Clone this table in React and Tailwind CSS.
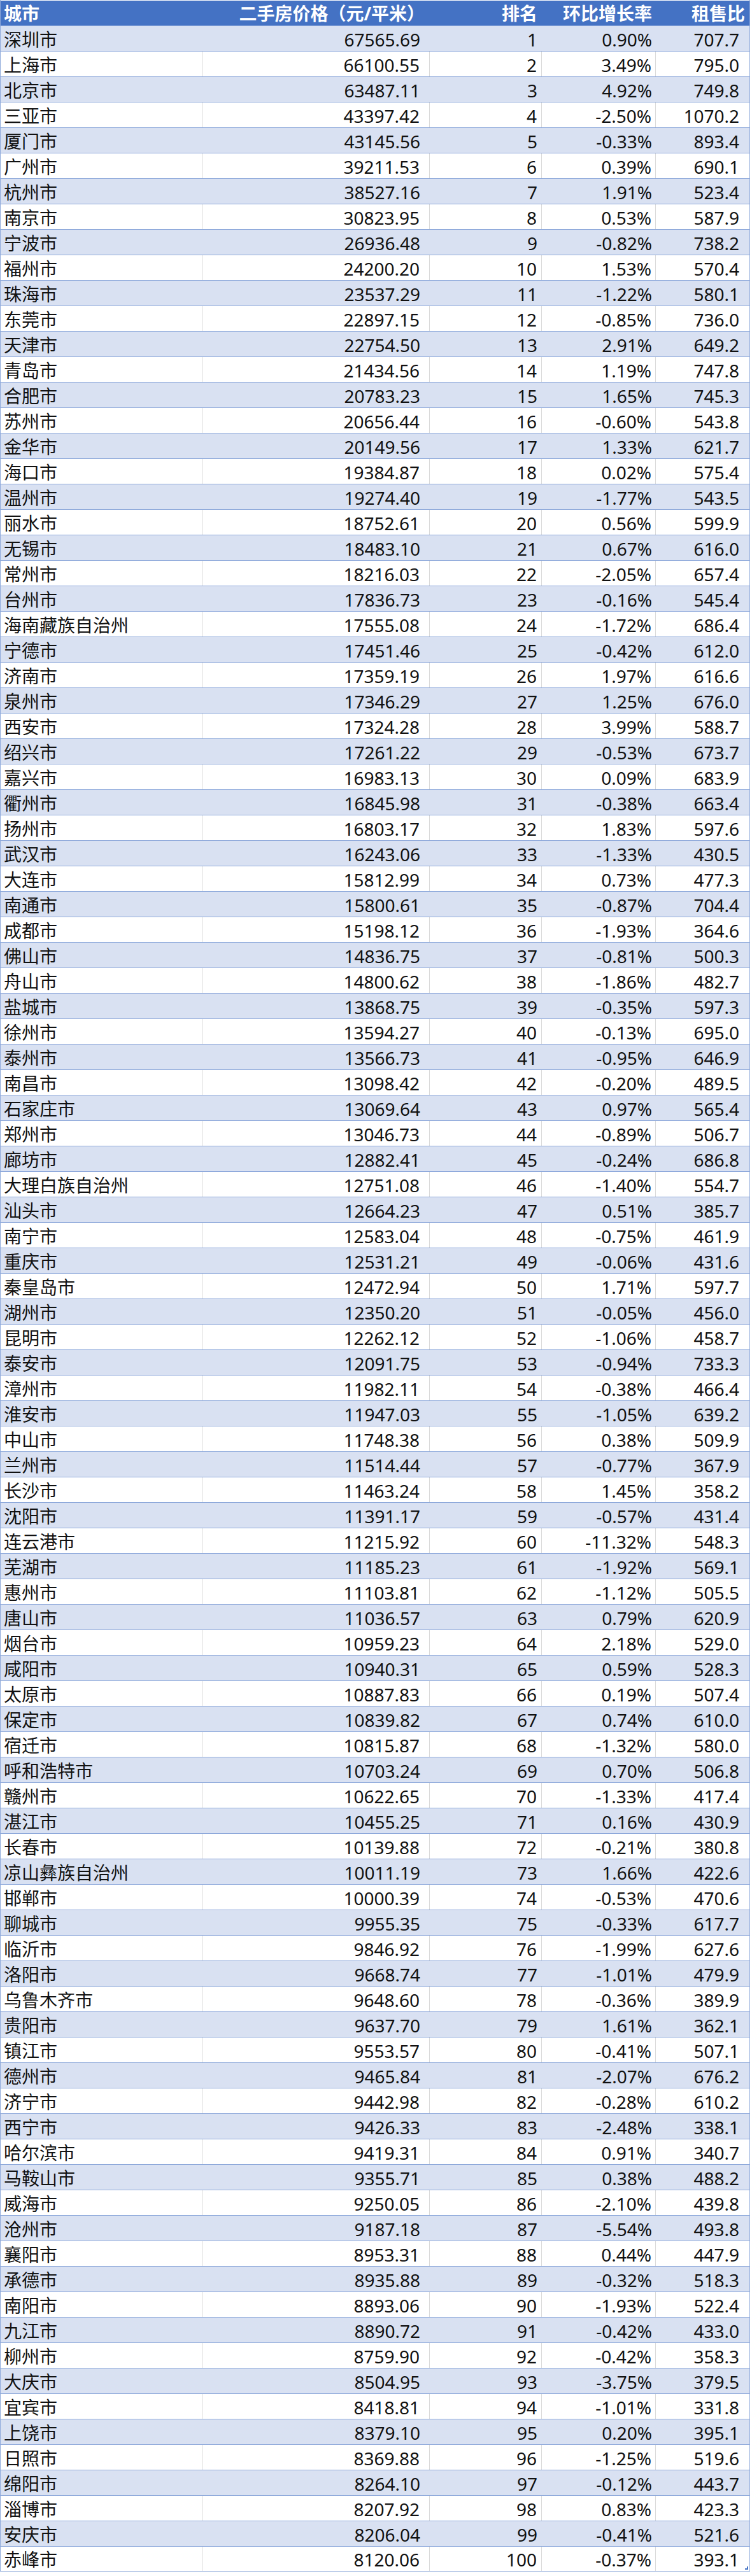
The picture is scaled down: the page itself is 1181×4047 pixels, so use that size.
const ROWS = [
  ['深圳市', '67565.69', 1, '0.90%', '707.7'],
  ['上海市', '66100.55', 2, '3.49%', '795.0'],
  ['北京市', '63487.11', 3, '4.92%', '749.8'],
  ['三亚市', '43397.42', 4, '-2.50%', '1070.2'],
  ['厦门市', '43145.56', 5, '-0.33%', '893.4'],
  ['广州市', '39211.53', 6, '0.39%', '690.1'],
  ['杭州市', '38527.16', 7, '1.91%', '523.4'],
  ['南京市', '30823.95', 8, '0.53%', '587.9'],
  ['宁波市', '26936.48', 9, '-0.82%', '738.2'],
  ['福州市', '24200.20', 10, '1.53%', '570.4'],
  ['珠海市', '23537.29', 11, '-1.22%', '580.1'],
  ['东莞市', '22897.15', 12, '-0.85%', '736.0'],
  ['天津市', '22754.50', 13, '2.91%', '649.2'],
  ['青岛市', '21434.56', 14, '1.19%', '747.8'],
  ['合肥市', '20783.23', 15, '1.65%', '745.3'],
  ['苏州市', '20656.44', 16, '-0.60%', '543.8'],
  ['金华市', '20149.56', 17, '1.33%', '621.7'],
  ['海口市', '19384.87', 18, '0.02%', '575.4'],
  ['温州市', '19274.40', 19, '-1.77%', '543.5'],
  ['丽水市', '18752.61', 20, '0.56%', '599.9'],
  ['无锡市', '18483.10', 21, '0.67%', '616.0'],
  ['常州市', '18216.03', 22, '-2.05%', '657.4'],
  ['台州市', '17836.73', 23, '-0.16%', '545.4'],
  ['海南藏族自治州', '17555.08', 24, '-1.72%', '686.4'],
  ['宁德市', '17451.46', 25, '-0.42%', '612.0'],
  ['济南市', '17359.19', 26, '1.97%', '616.6'],
  ['泉州市', '17346.29', 27, '1.25%', '676.0'],
  ['西安市', '17324.28', 28, '3.99%', '588.7'],
  ['绍兴市', '17261.22', 29, '-0.53%', '673.7'],
  ['嘉兴市', '16983.13', 30, '0.09%', '683.9'],
  ['衢州市', '16845.98', 31, '-0.38%', '663.4'],
  ['扬州市', '16803.17', 32, '1.83%', '597.6'],
  ['武汉市', '16243.06', 33, '-1.33%', '430.5'],
  ['大连市', '15812.99', 34, '0.73%', '477.3'],
  ['南通市', '15800.61', 35, '-0.87%', '704.4'],
  ['成都市', '15198.12', 36, '-1.93%', '364.6'],
  ['佛山市', '14836.75', 37, '-0.81%', '500.3'],
  ['舟山市', '14800.62', 38, '-1.86%', '482.7'],
  ['盐城市', '13868.75', 39, '-0.35%', '597.3'],
  ['徐州市', '13594.27', 40, '-0.13%', '695.0'],
  ['泰州市', '13566.73', 41, '-0.95%', '646.9'],
  ['南昌市', '13098.42', 42, '-0.20%', '489.5'],
  ['石家庄市', '13069.64', 43, '0.97%', '565.4'],
  ['郑州市', '13046.73', 44, '-0.89%', '506.7'],
  ['廊坊市', '12882.41', 45, '-0.24%', '686.8'],
  ['大理白族自治州', '12751.08', 46, '-1.40%', '554.7'],
  ['汕头市', '12664.23', 47, '0.51%', '385.7'],
  ['南宁市', '12583.04', 48, '-0.75%', '461.9'],
  ['重庆市', '12531.21', 49, '-0.06%', '431.6'],
  ['秦皇岛市', '12472.94', 50, '1.71%', '597.7'],
  ['湖州市', '12350.20', 51, '-0.05%', '456.0'],
  ['昆明市', '12262.12', 52, '-1.06%', '458.7'],
  ['泰安市', '12091.75', 53, '-0.94%', '733.3'],
  ['漳州市', '11982.11', 54, '-0.38%', '466.4'],
  ['淮安市', '11947.03', 55, '-1.05%', '639.2'],
  ['中山市', '11748.38', 56, '0.38%', '509.9'],
  ['兰州市', '11514.44', 57, '-0.77%', '367.9'],
  ['长沙市', '11463.24', 58, '1.45%', '358.2'],
  ['沈阳市', '11391.17', 59, '-0.57%', '431.4'],
  ['连云港市', '11215.92', 60, '-11.32%', '548.3'],
  ['芜湖市', '11185.23', 61, '-1.92%', '569.1'],
  ['惠州市', '11103.81', 62, '-1.12%', '505.5'],
  ['唐山市', '11036.57', 63, '0.79%', '620.9'],
  ['烟台市', '10959.23', 64, '2.18%', '529.0'],
  ['咸阳市', '10940.31', 65, '0.59%', '528.3'],
  ['太原市', '10887.83', 66, '0.19%', '507.4'],
  ['保定市', '10839.82', 67, '0.74%', '610.0'],
  ['宿迁市', '10815.87', 68, '-1.32%', '580.0'],
  ['呼和浩特市', '10703.24', 69, '0.70%', '506.8'],
  ['赣州市', '10622.65', 70, '-1.33%', '417.4'],
  ['湛江市', '10455.25', 71, '0.16%', '430.9'],
  ['长春市', '10139.88', 72, '-0.21%', '380.8'],
  ['凉山彝族自治州', '10011.19', 73, '1.66%', '422.6'],
  ['邯郸市', '10000.39', 74, '-0.53%', '470.6'],
  ['聊城市', '9955.35', 75, '-0.33%', '617.7'],
  ['临沂市', '9846.92', 76, '-1.99%', '627.6'],
  ['洛阳市', '9668.74', 77, '-1.01%', '479.9'],
  ['乌鲁木齐市', '9648.60', 78, '-0.36%', '389.9'],
  ['贵阳市', '9637.70', 79, '1.61%', '362.1'],
  ['镇江市', '9553.57', 80, '-0.41%', '507.1'],
  ['德州市', '9465.84', 81, '-2.07%', '676.2'],
  ['济宁市', '9442.98', 82, '-0.28%', '610.2'],
  ['西宁市', '9426.33', 83, '-2.48%', '338.1'],
  ['哈尔滨市', '9419.31', 84, '0.91%', '340.7'],
  ['马鞍山市', '9355.71', 85, '0.38%', '488.2'],
  ['威海市', '9250.05', 86, '-2.10%', '439.8'],
  ['沧州市', '9187.18', 87, '-5.54%', '493.8'],
  ['襄阳市', '8953.31', 88, '0.44%', '447.9'],
  ['承德市', '8935.88', 89, '-0.32%', '518.3'],
  ['南阳市', '8893.06', 90, '-1.93%', '522.4'],
  ['九江市', '8890.72', 91, '-0.42%', '433.0'],
  ['柳州市', '8759.90', 92, '-0.42%', '358.3'],
  ['大庆市', '8504.95', 93, '-3.75%', '379.5'],
  ['宜宾市', '8418.81', 94, '-1.01%', '331.8'],
  ['上饶市', '8379.10', 95, '0.20%', '395.1'],
  ['日照市', '8369.88', 96, '-1.25%', '519.6'],
  ['绵阳市', '8264.10', 97, '-0.12%', '443.7'],
  ['淄博市', '8207.92', 98, '0.83%', '423.3'],
  ['安庆市', '8206.04', 99, '-0.41%', '521.6'],
  ['赤峰市', '8120.06', 100, '-0.37%', '393.1'],
];

const COLS = 'grid grid-cols-[317px_357px_176px_179px_1fr]';

// ─── header row ───────────────────────────────────────────────────────────────
function HeaderRow() {
  return (
    <div className={`${COLS} h-[39px] bg-[#4472C4] text-white font-bold`}>
      <div className="flex items-center pl-[5px]">城市</div>
      <div className="flex items-center justify-end pr-[8px]">二手房价格（元/平米）</div>
      <div className="flex items-center justify-end pr-[7px]">排名</div>
      <div className="flex items-center justify-end pr-[6px]">环比增长率</div>
      <div className="flex items-center justify-end pr-[7px]">租售比</div>
    </div>
  );
}

// ─── body row ─────────────────────────────────────────────────────────────────
function DataRow({ row, banded, last }) {
  const [city, price, rank, change, ratio] = row;
  const bg = banded ? 'bg-[#D9E1F2]' : 'bg-white';
  const grid = banded ? '' : 'border-r border-[#D9D9D9]';
  return (
    <div
      className={`${COLS} h-[40px] border-t border-[#8EA9DB] ${last ? 'border-b' : ''} ${bg} text-[#111]`}
    >
      <div className={`flex items-center pl-[5px] pt-[2px] ${grid}`}>{city}</div>
      <div className={`flex items-center justify-end pr-[15px] pt-[2px] ${grid}`}>{price}</div>
      <div className={`flex items-center justify-end pr-[7px] pt-[2px] ${grid}`}>{rank}</div>
      <div className={`flex items-center justify-end pr-[6px] pt-[2px] ${grid}`}>{change}</div>
      <div className="flex items-center justify-end pr-[16px] pt-[2px]">{ratio}</div>
    </div>
  );
}

export default function App() {
  return (
    <div className="bg-white w-[1181px] min-h-[4047px]">
      <div className="relative w-[1178px] pt-[1px] border-x border-[#8EA9DB] font-['Noto_Sans','Noto_Sans_CJK_SC',sans-serif] text-[28px] leading-none">
        <HeaderRow />
        {ROWS.map((r, i) => (
          <DataRow key={r[2]} row={r} banded={i % 2 === 0} last={i === ROWS.length - 1} />
        ))}
        {/* table resize handle */}
        <div className="absolute right-[2px] bottom-[3px] w-[5px] h-[5px] border-r-2 border-b-2 border-[#4472C4]" />
      </div>
    </div>
  );
}
